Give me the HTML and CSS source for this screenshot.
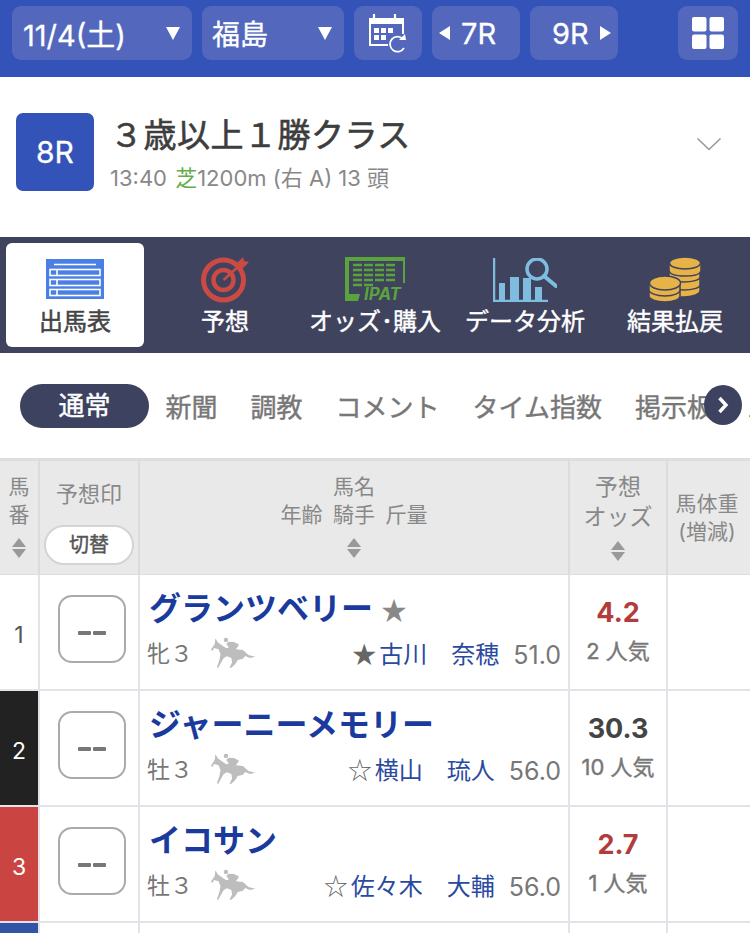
FILE: index.html
```html
<!DOCTYPE html>
<html lang="ja">
<head>
    <meta charset="UTF-8">
    <meta name="viewport" content="width=device-width, initial-scale=1.0">
    <title>出馬表</title>
    <link rel="stylesheet" href="styles.css">
</head>
<body>
    <!-- Top bar -->
    <header class="topBar">
        <div class="topBtn dateBtn">11/4(土)<span class="caretDown"></span></div>
        <div class="topBtn placeBtn">福島<span class="caretDown"></span></div>
        <div class="topBtn calBtn">
            <svg width="40" height="40" viewBox="0 0 40 40" fill="none" stroke="#fff" stroke-width="2">
                <path d="M20 32H2V6h33v15"/>
                <path d="M2 8.500h33" stroke-width="5"/>
                <path d="M6 1v7M27 1v7" stroke-width="2.200"/>
                <path d="M6 15h5v5H6zM13 15h5v5h-5zM20 15h5v5h-5zM6 22h5v5H6zM13 22h5v5h-5z" fill="#fff" stroke="none"/>
                <path d="M35 26a7.500 7.500 0 1 0 1 9" stroke-width="1.800"/>
                <path d="M31 27l7 0-1-6z" fill="#fff" stroke="none"/>
            </svg>
        </div>
        <div class="topBtn raceBtn prevBtn"><span class="caretLeft"></span>7R</div>
        <div class="topBtn raceBtn nextBtn">9R<span class="caretRight"></span></div>
        <div class="topBtn gridBtn">
            <svg width="32" height="32" viewBox="0 0 32 32" fill="#fff">
                <rect width="14.500" height="14.500" rx="2"/>
                <rect x="17.500" width="14.500" height="14.500" rx="2"/>
                <rect y="17.500" width="14.500" height="14.500" rx="2"/>
                <rect x="17.500" y="17.500" width="14.500" height="14.500" rx="2"/>
            </svg>
        </div>
    </header>

    <!-- Race summary -->
    <section class="raceInfo">
        <div class="raceNo">8R</div>
        <div class="raceText">
            <h1 class="raceTitle">３歳以上１勝クラス</h1>
            <p class="raceSub">13:40 <span class="turf">芝</span>1200m (右 A) 13 頭</p>
        </div>
        <svg class="raceChevron" width="26" height="14" viewBox="0 0 26 14" fill="none" stroke="#999" stroke-width="1.600">
            <path d="M1.500 1.500L13 12.500 24.500 1.500"/>
        </svg>
    </section>

    <!-- Main menu -->
    <nav class="mainNav">
        <div class="navItem active">
            <svg class="iconTable" width="58" height="40" viewBox="0 0 58 40">
                <rect width="58" height="40" fill="#4a7fe6"/>
                <path d="M8 5.500h42" stroke="#fff" stroke-width="1.500"/>
                <g fill="none" stroke="#fff" stroke-width="1.600">
                    <rect x="4" y="10.500" width="50" height="6"/>
                    <rect x="4" y="20.500" width="50" height="6"/>
                    <rect x="4" y="30.500" width="50" height="6"/>
                    <path d="M11 10.500v6M11 20.500v6M11 30.500v6"/>
                </g>
            </svg>
            <span>出馬表</span>
        </div>
        <div class="navItem">
            <svg width="48" height="46" viewBox="0 0 48 46" fill="none" stroke="#cb4a43">
                <circle cx="22.500" cy="23" r="20" stroke-width="5"/>
                <circle cx="22.500" cy="23" r="10" stroke-width="4.500"/>
                <path d="M22.500 23L40 7" stroke-width="2.500"/>
                <path d="M36 6l6-6 1 4 5 1-6 6-5-1z" fill="#cb4a43" stroke="none"/>
            </svg>
            <span>予想</span>
        </div>
        <div class="navItem">
            <svg class="iconIpat" width="60" height="44" viewBox="0 0 60 44">
                <path d="M0 0h60v26h-2V4H4v33h11l-2 7H0z" fill="#5ba33c"/>
                <path d="M8 8h44M8 13h44M8 18h44M8 23h44M8 28h22" stroke="#5ba33c" stroke-width="2.500" stroke-dasharray="9 2"/>
                <text class="ipatText" x="19" y="43">IPAT</text>
            </svg>
            <span>オッズ･購入</span>
        </div>
        <div class="navItem">
            <svg class="iconChart" width="64" height="44" viewBox="0 0 64 44" fill="none" stroke="#7fbde0">
                <path d="M1 0v43h54" stroke-width="2.500"/>
                <path d="M6 42V25h6v17zM17 42V19h9v23zM30 42V20h8v22zM42 42V29h7v13z" fill="#7fbde0" stroke="none"/>
                <circle cx="44" cy="11" r="10" stroke-width="3.500" fill="#3f435e"/>
                <path d="M51 18l12 10" stroke-width="4" stroke-linecap="round"/>
            </svg>
            <span>データ分析</span>
        </div>
        <div class="navItem">
            <svg class="iconCoins" width="52" height="45" viewBox="0 0 52 45">
                <g fill="#e7b347" stroke="#3f435e" stroke-width="1.500">
                    <path d="M20 28v8c0 3 7 4 15 4s16-3 16-6v-8z"/>
                    <path d="M20 20v8c0 3 7 5 15 5s16-2 16-5v-8z"/>
                    <path d="M20 12v8c0 3 7 5 15 5s16-2 16-5v-8z"/>
                    <ellipse cx="36" cy="7" rx="15.500" ry="7"/>
                    <path d="M20 7v6c0 4 7 6 16 6s16-2 16-6V7z"/>
                    <ellipse cx="36" cy="6" rx="15.500" ry="6"/>
                    <path d="M0 33v6c0 3 7 6 16 6s15-3 15-6v-6z"/>
                    <path d="M0 26v7c0 3 7 6 16 6s15-3 15-6v-7z"/>
                    <ellipse cx="16" cy="26" rx="15.500" ry="7"/>
                </g>
            </svg>
            <span>結果払戻</span>
        </div>
    </nav>

    <!-- Sub tabs -->
    <div class="subTabs">
        <span class="tabPill">通常</span>
        <span class="tabItem">新聞</span>
        <span class="tabItem">調教</span>
        <span class="tabItem">コメント</span>
        <span class="tabItem">タイム指数</span>
        <span class="tabItem">掲示板</span>
        <span class="tabItem">メモ</span>
        <div class="tabNext">
            <svg width="12" height="18" viewBox="0 0 12 18" fill="none" stroke="#fff" stroke-width="3.400">
                <path d="M2.500 2l6.500 7-6.500 7"/>
            </svg>
        </div>
    </div>

    <!-- Horse table -->
    <div class="horseTable">
        <div class="row headRow">
            <div class="cell headCell noHead">馬<br>番<span class="sortIcon"></span></div>
            <div class="cell headCell markHead">予想印<span class="switchBtn">切替</span></div>
            <div class="cell headCell nameHead">馬名<br><span class="headSub">年齢 騎手 斤量</span><span class="sortIcon"></span></div>
            <div class="cell headCell oddsHead">予想<br>オッズ<span class="sortIcon"></span></div>
            <div class="cell headCell weightHead">馬体重<br>(増減)</div>
        </div>

        <div class="row">
            <div class="cell numCell">1</div>
            <div class="cell"><div class="markBox"><span class="markDash"></span><span class="markDash"></span></div></div>
            <div class="cell nameCell">
                <div class="horseName">グランツベリー<span class="nameStar">★</span></div>
                <div class="horseMeta">
                    <span class="sexAge">牝３</span>
                    <svg class="horseIcon" width="46" height="32" viewBox="0 0 46 32"><use href="#runner"/></svg>
                    <span class="jockey"><span class="jockeyMark">★</span>古川　奈穂</span>
                    <span class="weight">51.0</span>
                </div>
            </div>
            <div class="cell oddsCell"><div class="odds hot">4.2</div><div class="pop">2 人気</div></div>
            <div class="cell"></div>
        </div>

        <div class="row">
            <div class="cell numCell black">2</div>
            <div class="cell"><div class="markBox"><span class="markDash"></span><span class="markDash"></span></div></div>
            <div class="cell nameCell">
                <div class="horseName">ジャーニーメモリー</div>
                <div class="horseMeta">
                    <span class="sexAge">牡３</span>
                    <svg class="horseIcon" width="46" height="32" viewBox="0 0 46 32"><use href="#runner"/></svg>
                    <span class="jockey"><span class="jockeyMark">☆</span>横山　琉人</span>
                    <span class="weight">56.0</span>
                </div>
            </div>
            <div class="cell oddsCell"><div class="odds">30.3</div><div class="pop">10 人気</div></div>
            <div class="cell"></div>
        </div>

        <div class="row">
            <div class="cell numCell red">3</div>
            <div class="cell"><div class="markBox"><span class="markDash"></span><span class="markDash"></span></div></div>
            <div class="cell nameCell">
                <div class="horseName">イコサン</div>
                <div class="horseMeta">
                    <span class="sexAge">牡３</span>
                    <svg class="horseIcon" width="46" height="32" viewBox="0 0 46 32"><use href="#runner"/></svg>
                    <span class="jockey"><span class="jockeyMark">☆</span>佐々木　大輔</span>
                    <span class="weight">56.0</span>
                </div>
            </div>
            <div class="cell oddsCell"><div class="odds hot">2.7</div><div class="pop">1 人気</div></div>
            <div class="cell"></div>
        </div>

        <div class="row">
            <div class="cell numCell blue"></div>
            <div class="cell"></div>
            <div class="cell"></div>
            <div class="cell"></div>
            <div class="cell"></div>
        </div>
    </div>

    <!-- Shared horse silhouette -->
    <svg class="svgDefs" width="0" height="0">
        <symbol id="runner" viewBox="27 10 140 100">
            <circle cx="75" cy="19" r="7" fill="#bdbdbd"/>
            <path fill="#bdbdbd" d="M28 50L40 31 42 14 50 27 60 34 76 45 84 43 76 31 84 25 100 26 116 34 106 48 128 51 145 66 167 72 150 76 135 69 128 78 112 82 104 94 92 106 86 106 94 90 92 76 78 70 68 76 60 90 50 108 47 103 54 84 58 64 52 48 38 44 32 54z"/>
        </symbol>
    </svg>
</body>
</html>
```

FILE: styles.css
```css
/* Base */
html {
    overflow: hidden;
    height: 933px;
}

body {
    margin: 0;
    height: 933px;
    background: #fff;
    overflow: hidden;
    font-family: Inter, "Noto Sans CJK JP", sans-serif;
    color: #444;
}

h1, p {
    margin: 0;
}

/* Top bar */
.topBar {
    display: flex;
    height: 71px;
    padding: 6px 12px 0;
    background: #3353b9;
    gap: 10px;
}

.topBtn {
    display: flex;
    align-items: center;
    box-sizing: border-box;
    height: 54px;
    background: #5368bc;
    border-radius: 9px;
    color: #fff;
    font-size: 29px;
    -webkit-text-stroke: 0.3px #fff;
}

.dateBtn {
    width: 180px;
    padding: 0 12px 0 11px;
    justify-content: space-between;
}

.placeBtn {
    width: 142px;
    padding: 0 12px 0 10px;
    font-size: 28px;
    justify-content: space-between;
}

.caretDown {
    width: 0;
    height: 0;
    border-left: 7px solid transparent;
    border-right: 7px solid transparent;
    border-top: 13px solid #fff;
}

.calBtn {
    width: 68px;
    justify-content: center;
}

.raceBtn {
    width: 88px;
    gap: 11px;
}

.prevBtn {
    padding-left: 7px;
}

.nextBtn {
    padding-left: 22px;
}

.caretLeft {
    width: 0;
    height: 0;
    border-top: 7px solid transparent;
    border-bottom: 7px solid transparent;
    border-right: 11px solid #fff;
}

.caretRight {
    width: 0;
    height: 0;
    border-top: 7px solid transparent;
    border-bottom: 7px solid transparent;
    border-left: 11px solid #fff;
}

.gridBtn {
    width: 60px;
    margin-left: 50px;
    justify-content: center;
}

/* Race summary */
.raceInfo {
    display: flex;
    align-items: center;
    box-sizing: border-box;
    height: 160px;
    padding: 0 28px 10px 16px;
}

.raceNo {
    display: flex;
    align-items: center;
    justify-content: center;
    width: 78px;
    height: 78px;
    background: #3353b9;
    border-radius: 7px;
    color: #fff;
    font-size: 30px;
    -webkit-text-stroke: 0.3px #fff;
}

.raceText {
    flex: 1;
    padding: 2px 0 0 16px;
}

.raceTitle {
    font-size: 33px;
    font-weight: 400;
    letter-spacing: 0.5px;
    line-height: 44px;
    color: #3d3d3d;
    -webkit-text-stroke: 0.6px #3d3d3d;
}

.raceSub {
    margin-top: 6px;
    font-size: 22px;
    line-height: 30px;
    color: #888;
}

.turf {
    margin-left: 2px;
    color: #63ad4d;
}

.raceChevron {
    margin-bottom: 16px;
}

/* Main menu */
.mainNav {
    display: grid;
    grid-template-columns: repeat(5, 150px);
    height: 116px;
    background: #3f435e;
}

.navItem {
    display: flex;
    flex-direction: column;
    align-items: center;
    justify-content: flex-end;
    padding-bottom: 16px;
    gap: 4px;
    color: #fff;
    font-size: 24px;
    line-height: 30px;
    white-space: nowrap;
    -webkit-text-stroke: 0.4px #fff;
}

.navItem.active {
    margin: 6px;
    padding-bottom: 10px;
    background: #fff;
    border-radius: 6px;
    color: #444;
    -webkit-text-stroke: 0.5px #444;
}

.iconTable {
    margin-bottom: 4px;
}

.iconIpat {
    margin-bottom: 2px;
    overflow: visible;
}

.iconChart, .iconCoins {
    margin-bottom: 1px;
}

.ipatText {
    font-size: 17px;
    font-weight: 700;
    font-style: italic;
    fill: #5ba33c;
    stroke: none;
    -webkit-text-stroke: 0;
}

/* Sub tabs */
.subTabs {
    position: relative;
    display: flex;
    align-items: center;
    box-sizing: border-box;
    height: 105px;
    padding-left: 20px;
    overflow: hidden;
    font-size: 26px;
    color: #777;
    white-space: nowrap;
    -webkit-text-stroke: 0.4px #777;
}

.tabPill {
    flex: none;
    width: 129px;
    height: 44px;
    line-height: 44px;
    text-align: center;
    background: #3c4260;
    border-radius: 22px;
    color: #fff;
    -webkit-text-stroke: 0.4px #fff;
}

.tabItem {
    flex: none;
    padding: 0 16.500px;
}

.tabNext {
    position: absolute;
    left: 704px;
    top: 32px;
    display: flex;
    align-items: center;
    justify-content: center;
    width: 38px;
    height: 40px;
    background: #3c4260;
    border-radius: 50%;
}

/* Horse table */
.horseTable {
    display: flex;
    flex-direction: column;
    border-top: 3px solid #dedede;
}

.row {
    display: grid;
    grid-template-columns: 40px 100px 430px 98px 82px;
    height: 116px;
    box-sizing: border-box;
    border-bottom: 2px solid #e3e4ea;
}

.cell {
    display: flex;
    align-items: center;
    justify-content: center;
    box-sizing: border-box;
    border-right: 2px solid #e3e4ea;
}

.cell:last-child {
    border-right: none;
}

.headRow {
    height: 114px;
    background: #e9e9e9;
    border-bottom: 1px solid #dedede;
}

.headCell {
    display: block;
    padding-top: 12px;
    text-align: center;
    font-size: 21px;
    line-height: 28px;
    color: #888;
    border-right-color: #dcdcdc;
}

.noHead {
    white-space: nowrap;
}

.markHead {
    padding-top: 19px;
    font-size: 22px;
}

.headSub {
    word-spacing: 4.500px;
}

.oddsHead {
    padding-top: 11px;
    font-size: 23px;
    line-height: 30px;
}

.weightHead {
    padding: 29px 4px 0 0;
}

.sortIcon {
    display: block;
    position: relative;
    width: 14px;
    height: 20px;
    margin: 9px auto 0;
}

.sortIcon::before, .sortIcon::after {
    content: "";
    position: absolute;
    left: 0;
    border-left: 7px solid transparent;
    border-right: 7px solid transparent;
}

.sortIcon::before {
    top: 0;
    border-bottom: 9px solid #999;
}

.sortIcon::after {
    bottom: 0;
    border-top: 9px solid #999;
}

.switchBtn {
    display: block;
    box-sizing: border-box;
    width: 90px;
    height: 40px;
    margin: 17px auto 0;
    background: #fff;
    border: 2px solid #d4d4d4;
    border-radius: 20px;
    color: #555;
    font-size: 20px;
    line-height: 36px;
    -webkit-text-stroke: 0.4px #555;
}

.numCell {
    padding-top: 5px;
    font-size: 23px;
    color: #555;
}

.numCell.black {
    background: #222;
    color: #fff;
}

.numCell.red {
    background: #ca4541;
    color: #fff;
}

.numCell.blue {
    background: #3353a6;
}

.markBox {
    display: flex;
    align-items: center;
    justify-content: center;
    gap: 2px;
    box-sizing: border-box;
    width: 68px;
    height: 68px;
    margin: -6px 0 0 6px;
    padding-top: 8px;
    border: 2px solid #aaa;
    border-radius: 14px;
}

.markDash {
    width: 13px;
    height: 4px;
    background: #777;
    border-radius: 1px;
}

.nameCell {
    display: block;
    padding: 13px 7px 0 9px;
}

.horseName {
    font-size: 32px;
    font-weight: 700;
    line-height: 42px;
    color: #1a3a9e;
    white-space: nowrap;
}

.nameStar {
    margin-left: 8px;
    font-family: "Noto Sans CJK JP", sans-serif;
    font-size: 26px;
    font-weight: 400;
    color: #888;
}

.horseMeta {
    display: flex;
    align-items: center;
    height: 40px;
    margin-top: 2px;
    margin-left: -2px;
    font-size: 23px;
    color: #777;
    white-space: nowrap;
}

.sexAge {
    width: 63px;
}

.horseIcon {
    margin-top: 2px;
}

.jockey {
    margin-left: auto;
    font-size: 24px;
    color: #2a4aa0;
}

.jockeyMark {
    margin-right: 3px;
    font-family: "Noto Sans CJK JP", sans-serif;
    color: #666;
}

.weight {
    margin: 5px 0 0 14px;
    font-size: 25px;
    color: #777;
}

.oddsCell {
    flex-direction: column;
}

.odds {
    font-size: 27px;
    font-weight: 700;
    line-height: 38px;
    color: #444;
}

.odds.hot {
    color: #b23c3c;
}

.pop {
    font-size: 22px;
    line-height: 38px;
    color: #777;
    -webkit-text-stroke: 0.4px #777;
}

.svgDefs {
    position: absolute;
}
```
